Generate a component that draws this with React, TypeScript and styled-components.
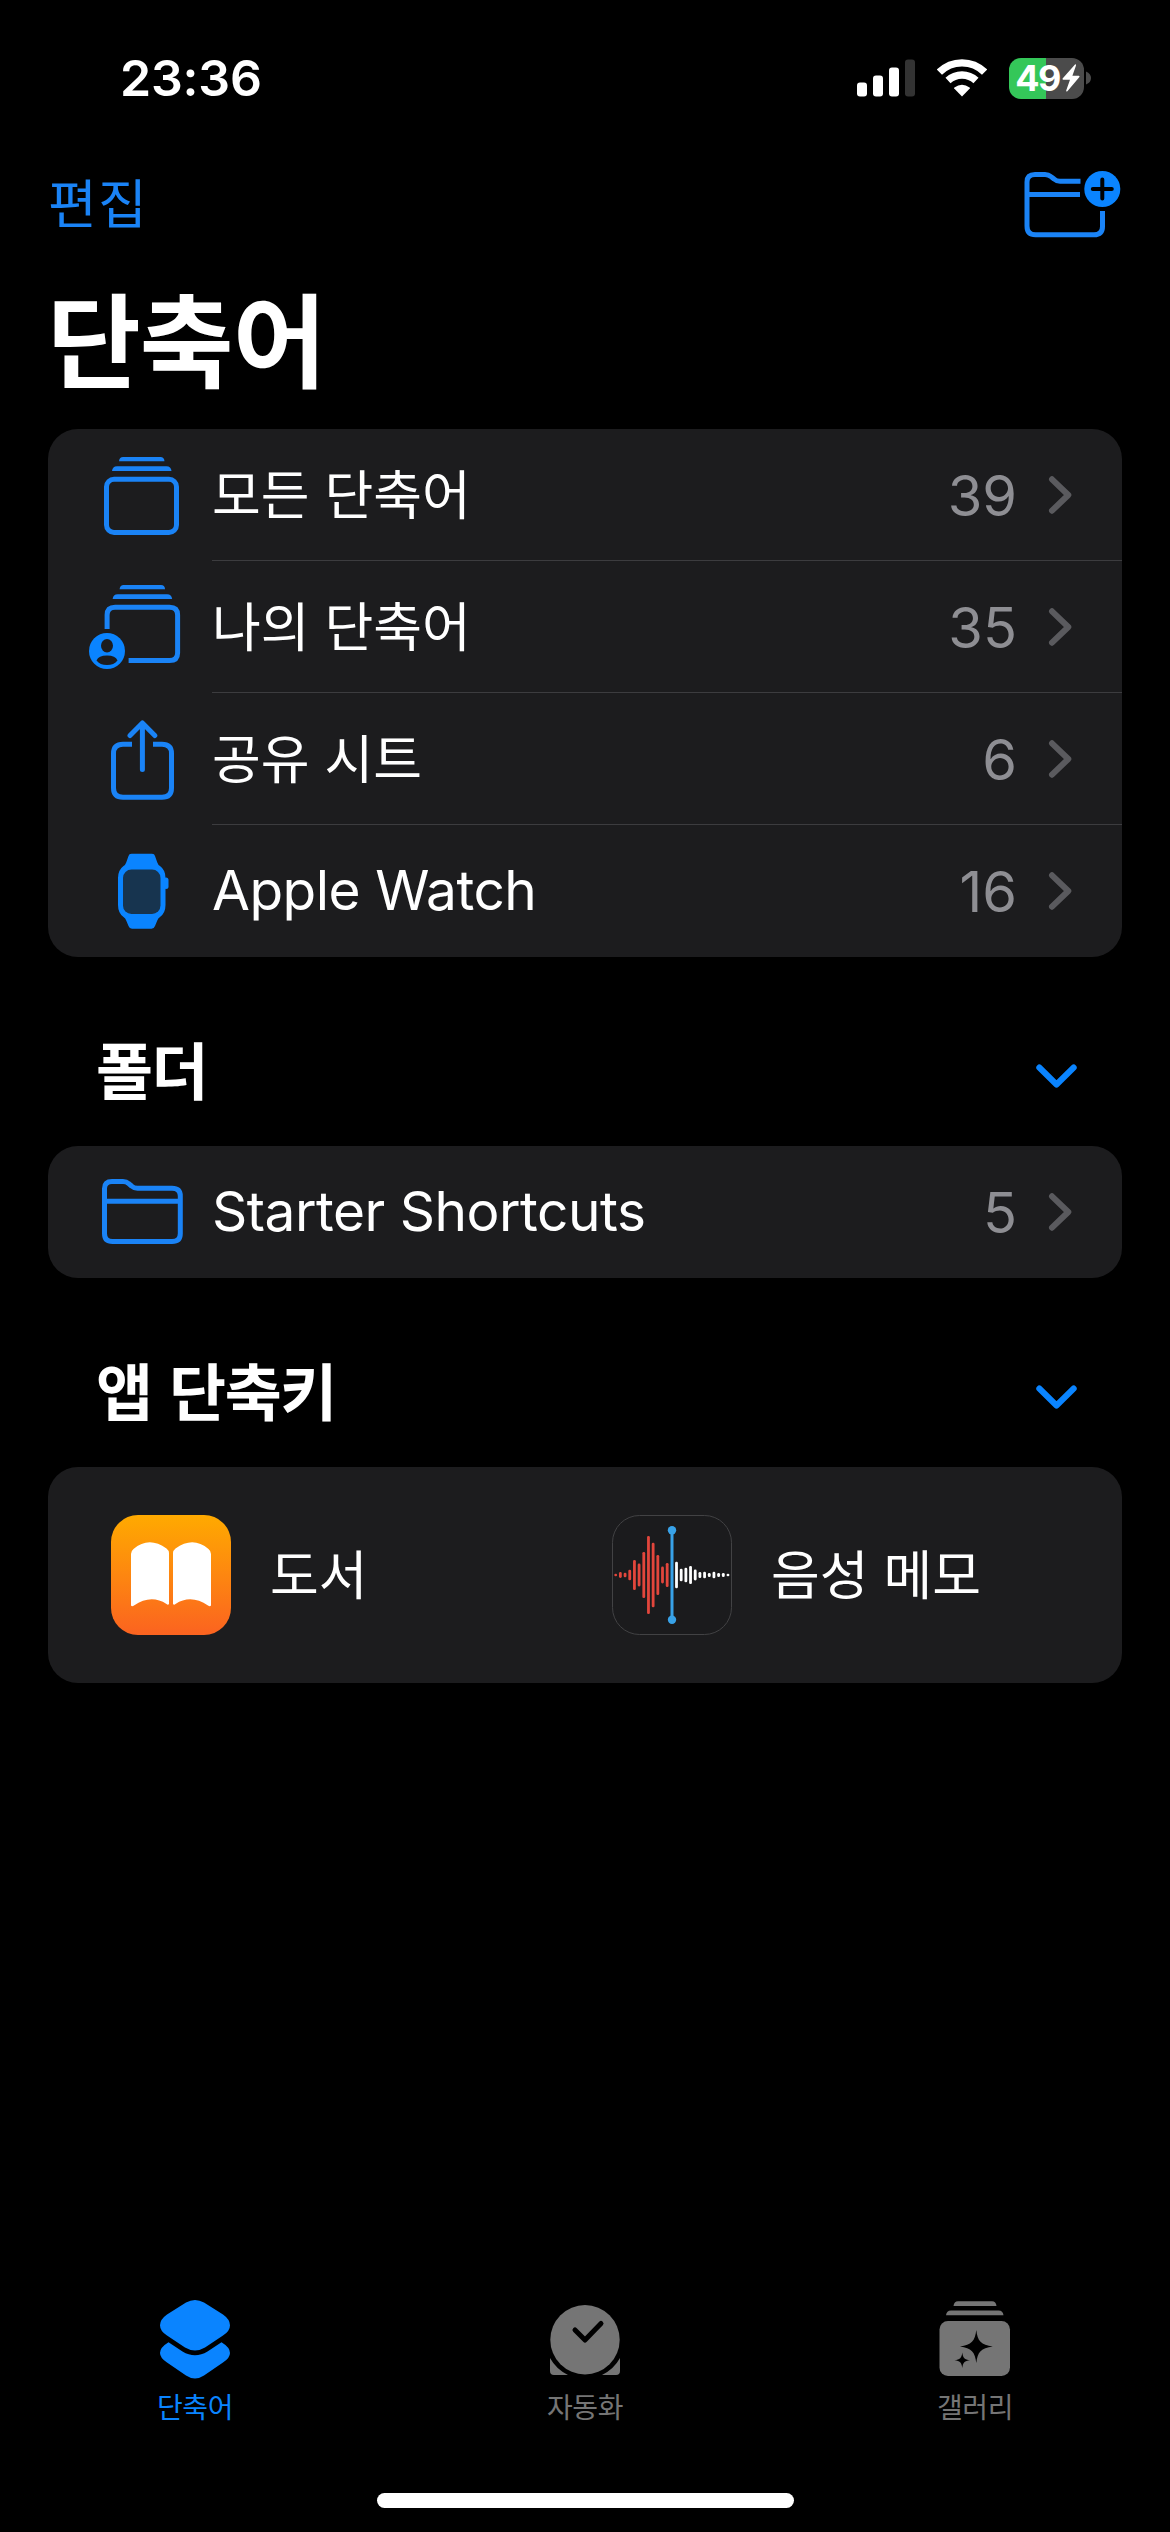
import React from "react";
import styled, { createGlobalStyle } from "styled-components";

const BLUE = "#0a84ff";
const LINE_BLUE = "#1a83f6";
const CARD = "#1c1c1e";
const TAB_GRAY = "#757575";

const GlobalStyle = createGlobalStyle`
  * { box-sizing: border-box; }
  html, body { margin: 0; padding: 0; background: #000; }
  body { font-family: Inter, "Noto Sans CJK KR", sans-serif; color: #fff; }
  svg { display: block; flex: none; }
`;

const Screen = styled.div`
  width: 1170px;
  height: 2532px;
  background: #000;
  display: flex;
  flex-direction: column;
  overflow: hidden;
`;

const StatusBar = styled.header`
  height: 140px;
  padding: 48px 79px 0 120px;
  display: flex;
  justify-content: space-between;
  align-items: flex-start;
`;

const Clock = styled.span`
  font: 600 50px/60px Inter, sans-serif;
  letter-spacing: -0.2px;
`;

const StatusIcons = styled.div`
  display: flex;
  align-items: center;
  gap: 22px;
  height: 60px;
`;

const BatteryWrap = styled.div`
  display: flex;
  align-items: center;
  gap: 2px;
`;

const BatteryBody = styled.div`
  width: 75px;
  height: 41px;
  border-radius: 12px;
  background: linear-gradient(to right, #34c759 0 37px, #4b4b4b 37px);
  display: flex;
  align-items: center;
  justify-content: center;
  gap: 2px;
  padding-left: 2px;
`;

const BatteryLevel = styled.span`
  font: 700 36px/41px Inter, sans-serif;
  letter-spacing: -1.5px;
`;

const NavBar = styled.nav`
  height: 126px;
  padding: 27px 48px 0 48px;
  display: flex;
  justify-content: space-between;
  align-items: flex-start;
`;

const EditButton = styled.button`
  border: 0;
  padding: 0;
  background: none;
  color: ${LINE_BLUE};
  font: 400 53px/68px "Noto Sans CJK KR", sans-serif;
  letter-spacing: 1.2px;
`;

const Title = styled.h1`
  margin: 0;
  height: 163px;
  padding: 0 47px;
  font: 700 102px/140px "Noto Sans CJK KR", sans-serif;
  letter-spacing: -1px;
`;

const Card = styled.section`
  margin: 0 48px;
  border-radius: 30px;
  background: ${CARD};
  overflow: hidden;
`;

const RowBox = styled.div`
  height: 132px;
  display: flex;
`;

const RowBody = styled.div<{ $divided: boolean }>`
  flex: 1;
  display: flex;
  align-items: center;
  padding-right: 50px;
  box-shadow: inset 0 -1px 0 ${(p) => (p.$divided ? "#3c3c3f" : "transparent")};
`;

const Label = styled.span<{ $latin?: boolean }>`
  flex: 1;
  padding-bottom: ${(p) => (p.$latin ? 2 : 7)}px;
  font: 400 ${(p) => (p.$latin ? "55px" : "53px")}/80px
    ${(p) => (p.$latin ? "Inter" : '"Noto Sans CJK KR"')}, sans-serif;
  letter-spacing: ${(p) => (p.$latin ? "-0.5px" : "0")};
  word-spacing: ${(p) => (p.$latin ? "0" : "3px")};
  white-space: pre;
`;

const Count = styled.span`
  padding-top: 2px;
  font: 400 56px/80px Inter, sans-serif;
  color: #8e8e93;
  margin-right: 31px;
`;

const SectionHeader = styled.header`
  height: 189px;
  padding: 67px 92px 0 96px;
  display: flex;
  justify-content: space-between;
  align-items: flex-start;
`;

const SectionTitle = styled.h2`
  margin: 0;
  font: 700 62px/88px "Noto Sans CJK KR", sans-serif;
  letter-spacing: -1.5px;
  word-spacing: 5px;
  white-space: pre;
`;

const ChevronSlot = styled.span`
  display: flex;
  height: 104px;
  align-items: center;
`;

const AppGrid = styled.div`
  height: 216px;
  padding: 0 63px;
  display: grid;
  grid-template-columns: 501px 1fr;
  align-items: center;
`;

const AppItem = styled.div`
  display: flex;
  align-items: center;
  gap: 39px;
`;

const TabBar = styled.nav`
  margin-top: auto;
  height: 206px;
  display: grid;
  grid-template-columns: repeat(3, 1fr);
`;

const Tab = styled.div<{ $active?: boolean }>`
  display: flex;
  flex-direction: column;
  align-items: center;
  color: ${(p) => (p.$active ? BLUE : TAB_GRAY)};
`;

const TabLabel = styled.span`
  font: 400 28px/38px "Noto Sans CJK KR", sans-serif;
  letter-spacing: -0.4px;
`;

const HomeArea = styled.div`
  height: 39px;
  display: flex;
  justify-content: center;
  align-items: flex-start;
`;

const HomeIndicator = styled.div`
  width: 417px;
  height: 15px;
  border-radius: 8px;
  background: #fff;
`;

const Signal = () => (
  <svg width="58" height="38" viewBox="0 0 58 38">
    <rect x="0" y="23.5" width="10" height="14" rx="3" fill="#fff" />
    <rect x="16" y="16.5" width="10" height="21" rx="3" fill="#fff" />
    <rect x="32" y="8.5" width="10" height="29" rx="3" fill="#fff" />
    <rect x="48" y="0.5" width="10" height="37" rx="3" fill="#333" />
  </svg>
);

const Wifi = () => (
  <svg width="50" height="38" viewBox="0 0 50 38">
    <path d="M25 37.5 L17.2 29.6 Q16.8 29 17.4 28.5 Q25 23 32.6 28.5 Q33.2 29 32.8 29.6Z" fill="#fff" />
    <path d="M11 21.5 A20.5 20.5 0 0 1 39 21.5" fill="none" stroke="#fff" strokeWidth="7.4" />
    <path d="M2.4 13.2 A32 32 0 0 1 47.6 13.2" fill="none" stroke="#fff" strokeWidth="7.4" />
  </svg>
);

const Bolt = () => (
  <svg width="18" height="28" viewBox="0 0 18 28">
    <path d="M13 .5 L.6 14.6 Q0 15.6 1.2 15.8 H8 L4.2 26.5 Q4 28 5.4 27.2 L17.4 13 Q18 12 16.8 11.8 H10.4 L14 1.4 Q14.2 0 13 .5Z" fill="#fff" />
  </svg>
);

const BatteryNub = () => (
  <svg width="5" height="14" viewBox="0 0 5 14">
    <path d="M0 0.5 Q5 2.5 5 7 T0 13.5Z" fill="#4b4b4b" />
  </svg>
);

const NewFolder = () => (
  <svg width="98" height="72" viewBox="0 0 98 72" fill="none" stroke={LINE_BLUE} strokeWidth="5">
    <path d="M56.5 14.3 H36 Q32.5 14.3 30 12 L27 9.6 Q24.5 7.5 21 7.5 H11 Q3 7.5 3 15 V59 Q3 67.8 11.5 67.8 H70 Q78.5 67.8 78.5 59.5 V44" />
    <path d="M3 27.5 H56" />
    <circle cx="78.3" cy="22" r="18" fill={BLUE} stroke="none" />
    <path d="M78.3 12.5 V31.5 M68.8 22 H87.8" stroke="#000" strokeWidth="4" strokeLinecap="round" />
  </svg>
);

const RowSvg = ({ children }: { children: React.ReactNode }) => (
  <svg width="164" height="132" viewBox="0 0 164 132" fill="none" stroke={LINE_BLUE} strokeWidth="5">
    {children}
  </svg>
);

const StackBars = () => (
  <g fill={LINE_BLUE} stroke="none">
    <path d="M71 32.2 Q71.5 28 75 28 H112.5 Q116 28 116.5 32.2Z" />
    <path d="M64 42 Q64.5 37.2 69 37.2 H118.5 Q123 37.2 123.5 42Z" />
  </g>
);

const AllIcon = () => (
  <RowSvg>
    <StackBars />
    <rect x="58.5" y="50.2" width="70" height="53.3" rx="7.5" />
  </RowSvg>
);

const MineIcon = () => (
  <RowSvg>
    <g transform="translate(.6 -4)">
      <StackBars />
      <path d="M58.5 72 V58 Q58.5 50.2 66.5 50.2 H121 Q129 50.2 129 58 V96 Q129 103.6 121 103.6 H80" />
    </g>
    <circle cx="59" cy="90" r="18" fill={BLUE} stroke="none" />
    <ellipse cx="59" cy="84.8" rx="6" ry="6.7" fill={CARD} stroke="none" />
    <path d="M48.5 99.5 Q50.5 94.5 59 94.5 T69.5 99.500 Q66 104 59 104 T48.5 99.5Z" fill={CARD} stroke="none" />
  </RowSvg>
);

const ShareIcon = () => (
  <RowSvg>
    <path d="M84 51.3 H75 Q65.5 51.3 65.5 60.5 V95 Q65.5 104.3 75 104.3 H114 Q123.5 104.3 123.5 95 V60.5 Q123.5 51.3 114 51.3 H105" />
    <path d="M94.4 76.5 V30.5 M82 42.5 L94.4 30 L106.8 42.5" strokeLinecap="round" strokeLinejoin="round" />
  </RowSvg>
);

const WatchIcon = () => (
  <RowSvg>
    <path
      d="M80.5 31 Q81 28.8 83.5 28.8 H104 Q106.5 28.8 107 31 L109.3 37.5 Q110 39.800 112 41 Q117.500 45 117.500 53 V80 Q117.500 88 112 92 Q110 93.200 109.300 95.500 L107 101 Q106 103.800 103.500 103.800 H84 Q81.500 103.800 80.500 101 L78.200 95.500 Q77.500 93.200 75.500 92 Q70 88 70 80 V53 Q70 45 75.500 41 Q77.500 39.800 78.200 37.500Z"
      fill={BLUE}
      stroke="none"
    />
    <rect x="75" y="44.5" width="37.5" height="44.5" rx="8.5" fill="#17344f" stroke="none" />
    <rect x="115.5" y="52.5" width="5" height="11.5" rx="2.5" fill={BLUE} stroke="none" />
  </RowSvg>
);

const FolderIcon = () => (
  <RowSvg>
    <path d="M56.5 42.5 Q56.5 35.5 64 35.5 H75 Q78.5 35.5 80.5 37.5 L83.5 40 Q86 42.3 89.5 42.3 H124 Q132.3 42.3 132.3 50 V87.5 Q132.3 95.5 124 95.5 H64.5 Q56.5 95.5 56.5 87.5Z" />
    <path d="M56.5 55.3 H132" />
  </RowSvg>
);

const Disclosure = () => (
  <svg width="24" height="40" viewBox="0 0 24 40">
    <path d="M4 4.3 L20.3 20 L4 35.7" fill="none" stroke="#5a5a5e" strokeWidth="6" strokeLinecap="round" strokeLinejoin="round" />
  </svg>
);

const ChevronDown = () => (
  <svg width="43" height="26" viewBox="0 0 43 26">
    <path d="M4.3 4.5 L21.5 21.5 L38.7 4.5" fill="none" stroke={BLUE} strokeWidth="6" strokeLinecap="round" strokeLinejoin="round" />
  </svg>
);

const BooksIcon = () => (
  <svg width="120" height="120" viewBox="0 0 120 120">
    <defs>
      <linearGradient id="books" x1="0" y1="0" x2="0" y2="1">
        <stop offset="0" stopColor="#ffaa00" />
        <stop offset="1" stopColor="#fb6320" />
      </linearGradient>
    </defs>
    <rect width="120" height="120" rx="27" fill="url(#books)" />
    <path d="M20 39 Q20 36 22.5 34 Q38 21 55.5 33.5 Q58 35.5 58 38 V89 Q57 90.5 55.5 89 Q40 79 23 90.5 Q21 92 20 90.5Z" fill="#fff" />
    <path d="M62 38 Q62 35.5 64.5 33.5 Q82 21 97.5 34 Q100 36 100 39 V90.5 Q99 92 97 90.5 Q80 79 64.5 89 Q63 90.5 62 89Z" fill="#fff" />
  </svg>
);

const RED_BARS = [1.3, 2.9, 2.2, 5.3, 15, 11.4, 23, 39, 32.2, 20, 8.4, 12.1];
const WHITE_BARS = [13.2, 6.3, 7.3, 9.1, 5.4, 3, 3.3, 2, 3.2, 2, 2, 1.3];

const Bars = ({ values, start, color }: { values: number[]; start: number; color: string }) => (
  <g fill={color}>
    {values.map((h, i) => (
      <rect key={i} x={start + i * 4.68 - 1.4} y={60 - h} width="2.8" height={h * 2} rx="1.3" />
    ))}
  </g>
);

const VoiceIcon = () => (
  <svg width="120" height="120" viewBox="0 0 120 120">
    <rect x=".5" y=".5" width="119" height="119" rx="27" fill="#1b1b1d" stroke="#424244" />
    <Bars values={RED_BARS} start={3.7} color="#e2463c" />
    <Bars values={WHITE_BARS} start={64.5} color="#fff" />
    <g fill="#38a2e8">
      <rect x="58.5" y="15" width="3" height="90" />
      <circle cx="60" cy="15.3" r="4.2" />
      <circle cx="60" cy="104.8" r="4.2" />
    </g>
  </svg>
);

const ShortcutsTabIcon = () => (
  <svg width="80" height="100" viewBox="0 0 80 100" fill="currentColor">
    <path d="M31 15.500 Q40 10.500 49 15.500 L68 27.500 Q75 32.500 75 38.200 Q75 44 68 48.500 L50 60.500 Q40 66.500 30 60.500 L12 48.500 Q5 44 5 38.200 Q5 32.500 12 27.500Z" />
    <path d="M13.500 55.300 Q5 60.500 5 66 Q5 71 12 75.500 L31 88.500 Q40 94.500 49 88.500 L68 75.500 Q75 71 75 66 Q75 60.500 66.500 55.300 L52.500 64.500 Q40 72 27.500 64.500Z" />
  </svg>
);

const AutomationTabIcon = () => (
  <svg width="80" height="100" viewBox="0 0 80 100" fill="currentColor">
    <circle cx="40" cy="52.7" r="34.7" />
    <path d="M30 43 L40 53 L56 36.5" fill="none" stroke="#000" strokeWidth="5" strokeLinecap="round" strokeLinejoin="round" />
    <path d="M5 71 Q11 82 23 88 H9 Q5 88 5 84Z M75 71 Q69 82 57 88 H71 Q75 88 75 84Z" />
  </svg>
);

const GalleryTabIcon = () => (
  <svg width="80" height="100" viewBox="0 0 80 100" fill="currentColor">
    <path d="M18.500 19 Q19 14.3 23 14.3 H57 Q61 14.3 61.5 19Z M11 28.2 Q11.5 23.5 16 23.5 H63.5 Q68 23.5 68.5 28.2Z" />
    <rect x="4.5" y="34" width="70.5" height="55" rx="8.5" />
    <g fill="#000">
      <path d="M41.3 43 C42.5 54 46 58 57.8 59.5 C46 61 42.5 65 41.3 76 C40 65 36.5 61 25 59.5 C36.5 58 40 54 41.3 43Z" />
      <path d="M27.3 65.5 C28 71 29.5 72.5 35 73.3 C29.5 74 28 75.5 27.3 81 C26.5 75.5 25 74 19.5 73.3 C25 72.5 26.5 71 27.3 65.5Z" />
    </g>
  </svg>
);

type RowProps = {
  icon: React.ReactNode;
  label: string;
  count: number;
  latin?: boolean;
  divided?: boolean;
};

const Row = ({ icon, label, count, latin, divided = false }: RowProps) => (
  <RowBox>
    {icon}
    <RowBody $divided={divided}>
      <Label $latin={latin}>{label}</Label>
      <Count>{count}</Count>
      <Disclosure />
    </RowBody>
  </RowBox>
);

export default function App() {
  return (
    <>
      <GlobalStyle />
      <Screen>
        <StatusBar>
          <Clock>23:36</Clock>
          <StatusIcons>
            <Signal />
            <Wifi />
            <BatteryWrap>
              <BatteryBody>
                <BatteryLevel>49</BatteryLevel>
                <Bolt />
              </BatteryBody>
              <BatteryNub />
            </BatteryWrap>
          </StatusIcons>
        </StatusBar>
        <NavBar>
          <EditButton>편집</EditButton>
          <NewFolder />
        </NavBar>
        <Title>단축어</Title>
        <Card>
          <Row icon={<AllIcon />} label="모든 단축어" count={39} divided />
          <Row icon={<MineIcon />} label="나의 단축어" count={35} divided />
          <Row icon={<ShareIcon />} label="공유 시트" count={6} divided />
          <Row icon={<WatchIcon />} label="Apple Watch" count={16} latin />
        </Card>
        <SectionHeader>
          <SectionTitle>폴더</SectionTitle>
          <ChevronSlot><ChevronDown /></ChevronSlot>
        </SectionHeader>
        <Card>
          <Row icon={<FolderIcon />} label="Starter Shortcuts" count={5} latin />
        </Card>
        <SectionHeader>
          <SectionTitle>앱 단축키</SectionTitle>
          <ChevronSlot><ChevronDown /></ChevronSlot>
        </SectionHeader>
        <Card>
          <AppGrid>
            <AppItem><BooksIcon /><Label>도서</Label></AppItem>
            <AppItem><VoiceIcon /><Label>음성 메모</Label></AppItem>
          </AppGrid>
        </Card>
        <TabBar>
          <Tab $active><ShortcutsTabIcon /><TabLabel>단축어</TabLabel></Tab>
          <Tab><AutomationTabIcon /><TabLabel>자동화</TabLabel></Tab>
          <Tab><GalleryTabIcon /><TabLabel>갤러리</TabLabel></Tab>
        </TabBar>
        <HomeArea><HomeIndicator /></HomeArea>
      </Screen>
    </>
  );
}
